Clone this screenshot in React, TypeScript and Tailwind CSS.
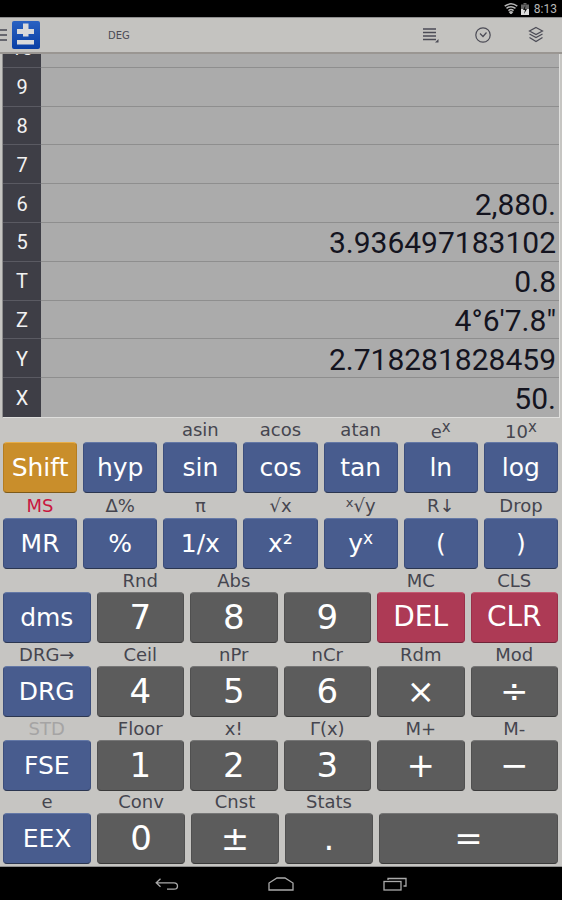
import type { ReactNode } from "react";

type KeyDef = { top?: ReactNode; topColor?: string; label: ReactNode; kind?: "blue" | "gray" | "red" | "gold"; size?: string };

const kindClass = {
  blue: "bg-[#485c8e] border-t-[#6478a6] border-x-[#3c4e7c] border-b-[#2b3650]",
  gray: "bg-[#5c5c5c] border-t-[#767676] border-x-[#505050] border-b-[#3a3a3a]",
  red: "bg-[#ad3a55] border-t-[#c45a72] border-x-[#9a3049] border-b-[#6e2438]",
  gold: "bg-[#c98e2b] border-t-[#e8ae48] border-x-[#b57d20] border-b-[#7d5a1a]",
};

const supX = <span className="text-[15px] align-[6px]">x</span>;

const topRows: KeyDef[][] = [
  [
    { label: "Shift", kind: "gold" },
    { label: "hyp" },
    { top: "asin", label: "sin" },
    { top: "acos", label: "cos" },
    { top: "atan", label: "tan" },
    { top: <span>e{supX}</span>, label: "ln" },
    { top: <span>10{supX}</span>, label: "log" },
  ],
  [
    { top: "MS", topColor: "text-[#c9163f]", label: "MR" },
    { top: "Δ%", label: "%" },
    { top: "π", label: "1/x" },
    { top: "√x", label: "x²" },
    { top: <span><span className="text-[13px] align-[5px]">x</span>√y</span>, label: <span>y<span className="text-[17px] align-[8px]">x</span></span> },
    { top: "R↓", label: "(" },
    { top: "Drop", label: ")" },
  ],
];

const bottomRows: KeyDef[][] = [
  [
    { label: "dms" },
    { top: "Rnd", label: "7", kind: "gray", size: "text-[34px]" },
    { top: "Abs", label: "8", kind: "gray", size: "text-[34px]" },
    { label: "9", kind: "gray", size: "text-[34px]" },
    { top: "MC", label: "DEL", kind: "red", size: "text-[28px]" },
    { top: "CLS", label: "CLR", kind: "red", size: "text-[28px]" },
  ],
  [
    { top: "DRG→", label: "DRG" },
    { top: "Ceil", label: "4", kind: "gray", size: "text-[34px]" },
    { top: "nPr", label: "5", kind: "gray", size: "text-[34px]" },
    { top: "nCr", label: "6", kind: "gray", size: "text-[34px]" },
    { top: "Rdm", label: "×", kind: "gray", size: "text-[34px]" },
    { top: "Mod", label: "÷", kind: "gray", size: "text-[34px]" },
  ],
  [
    { top: "STD", topColor: "text-[#a5a4a4]", label: "FSE" },
    { top: "Floor", label: "1", kind: "gray", size: "text-[34px]" },
    { top: "x!", label: "2", kind: "gray", size: "text-[34px]" },
    { top: "Γ(x)", label: "3", kind: "gray", size: "text-[34px]" },
    { top: "M+", label: "+", kind: "gray", size: "text-[34px]" },
    { top: "M-", label: "−", kind: "gray", size: "text-[34px]" },
  ],
];

const lastRow: KeyDef[] = [
  { top: "e", label: "EEX" },
  { top: "Conv", label: "0", kind: "gray", size: "text-[34px]" },
  { top: "Cnst", label: "±", kind: "gray", size: "text-[34px]" },
  { top: "Stats", label: ".", kind: "gray", size: "text-[34px]" },
  { label: "=", kind: "gray", size: "text-[34px]" },
];

const stack: [string, string][] = [
  ["10", ""],
  ["9", ""],
  ["8", ""],
  ["7", ""],
  ["6", "2,880."],
  ["5", "3.936497183102"],
  ["T", "0.8"],
  ["Z", "4°6'7.8\""],
  ["Y", "2.718281828459"],
  ["X", "50."],
];

function Key({ def }: { def: KeyDef }) {
  return (
    <div className="flex flex-col min-w-0">
      <div className={`flex-1 flex items-center justify-center text-[18px] leading-none whitespace-nowrap ${def.topColor ?? "text-[#45454f]"}`}>
        {def.top}
      </div>
      <div
        className={`h-[51px] shrink-0 flex items-center justify-center rounded-[4px] border text-white leading-none pb-px ${def.size ?? "text-[25px]"} ${kindClass[def.kind ?? "blue"]}`}
      >
        {def.label}
      </div>
    </div>
  );
}

export default function App() {
  return (
    <div className="w-[562px] h-[900px] flex flex-col overflow-hidden bg-[#c6c5c2] font-['DejaVu_Sans',sans-serif]">
      {/* status bar */}
      <div className="h-[17px] bg-black flex items-center justify-end gap-[3px] pr-[5px] shrink-0 text-[#b8b8b8]">
        <svg width="14" height="11" viewBox="0 0 14 11" fill="none" stroke="#b8b8b8" strokeWidth="1.500">
          <path d="M.7 3.200Q7-1.500 13.300 3.200" />
          <path d="M2.500 5.400Q7 2 11.500 5.400" />
          <path d="M4.400 7.600Q7 5.600 9.600 7.600" />
          <path d="M7 10.500 5.800 9.200Q7 8.400 8.200 9.200Z" fill="#b8b8b8" />
        </svg>
        <svg width="8" height="12" viewBox="0 0 8 12">
          <rect x="2.500" y="0" width="3" height="1.500" fill="#666" />
          <rect x="0" y="1.500" width="8" height="10.500" fill="#666" />
          <rect x="0" y="6" width="8" height="6" fill="#ddd" />
          <path d="M4.500 2 2 7h2L3 11l3-5H4z" fill="#111" />
        </svg>
        <span className="text-[12px] leading-none ml-[2px] font-['Roboto',sans-serif]">8:13</span>
      </div>

      {/* toolbar */}
      <div className="h-[37px] shrink-0 flex items-center bg-[#c4c3c0] border-t border-[#8f8f8f] border-b-2 border-b-[#9a9692]">
        <div className="w-[7px] flex flex-col gap-[3px] shrink-0">
          <span className="h-[2px] bg-[#66666e]" />
          <span className="h-[2px] bg-[#66666e]" />
          <span className="h-[2px] bg-[#66666e]" />
        </div>
        <svg width="28" height="28" viewBox="0 0 28 28" className="ml-[5px] shrink-0">
          <defs>
            <linearGradient id="logo" x1="0" y1="0" x2="0" y2="1">
              <stop offset="0" stopColor="#2a62c2" />
              <stop offset="1" stopColor="#0a3fa5" />
            </linearGradient>
          </defs>
          <rect width="28" height="28" rx="2" fill="url(#logo)" />
          <rect x="5" y="8" width="17" height="5" fill="#dadada" />
          <rect x="11" y="2.500" width="5.500" height="13" fill="#dadada" />
          <rect x="5" y="19" width="17" height="4.500" fill="#dadada" />
        </svg>
        <span className="ml-[68px] text-[10px] text-[#4b4b55]">DEG</span>
        <div className="ml-auto flex items-center">
          <svg width="16" height="16" viewBox="0 0 16 16" className="mr-[35px]">
            <path d="M0 2h13M0 5.500h13M0 9h13M0 12.500h13" stroke="#4b4b55" strokeWidth="1.600" />
            <path d="M15.500 12v3.500H12z" fill="#4b4b55" />
          </svg>
          <svg width="18" height="18" viewBox="0 0 18 18" className="mr-[35px]" fill="none" stroke="#4b4b55">
            <circle cx="9" cy="9" r="7.200" strokeWidth="1.200" />
            <path d="M6 7.500 9 10.500 12.500 6.500" strokeWidth="1.200" />
          </svg>
          <svg width="18" height="18" viewBox="0 0 18 18" className="mr-[17px]" fill="none" stroke="#4b4b55" strokeWidth="1.200">
            <path d="M9 1.500 15.500 5 9 8.500 2.500 5Z" />
            <path d="M2.500 8 9 11.500 15.500 8" />
            <path d="M2.500 11.500 9 15.500 15.500 11.500" />
          </svg>
        </div>
      </div>

      {/* stack display */}
      <div className="h-[364px] shrink-0 pl-[2px] pr-[2px]">
        <div className="h-full flex flex-col justify-end overflow-hidden bg-[#ababab] border-l border-l-[#8f8f8f] border-r border-r-[#dededc] border-b border-b-[#dededc]">
          {stack.map(([name, value], i) => {
            const last = i === stack.length - 1;
            return (
              <div key={name} className="flex h-[38.800px] shrink-0">
                <div className={`w-[38px] shrink-0 flex items-center justify-center pt-px bg-[#3e3e46] text-[#f2f2f2] text-[20px] font-['Roboto',sans-serif] ${last ? "" : "border-b border-[#5a5a62]"}`}>
                  {name}
                </div>
                <div className={`flex-1 flex items-center justify-end pr-[3px] pt-[3px] text-[#14141f] text-[30px] leading-none whitespace-nowrap font-['Roboto',sans-serif] ${last ? "" : "border-b border-[#8e8e8e]"}`}>
                  {value}
                </div>
              </div>
            );
          })}
        </div>
      </div>

      {/* keys */}
      <div className="flex-1 pl-[3px] pr-[4px] flex flex-col">
        {topRows.map((row, i) => (
          <div key={i} className={`grid grid-cols-7 gap-x-[6px] ${i === 0 ? "h-[75px]" : "h-[76px]"}`}>
            {row.map((k, j) => (
              <Key key={j} def={k} />
            ))}
          </div>
        ))}
        {bottomRows.map((row, i) => (
          <div key={i} className="grid grid-cols-6 gap-x-[6px] h-[74px]">
            {row.map((k, j) => (
              <Key key={j} def={k} />
            ))}
          </div>
        ))}
        <div className="grid grid-cols-[88px_88px_88px_88px_1fr] gap-x-[6px] h-[73px]">
          {lastRow.map((k, j) => (
            <Key key={j} def={k} />
          ))}
        </div>
      </div>

      {/* nav bar */}
      <div className="h-[34px] shrink-0 bg-black flex items-center justify-center gap-[89px] border-t border-[#8f8f8f]">
        <svg width="24" height="14" viewBox="0 0 24 14" fill="none" stroke="#aaa" strokeWidth="1.300">
          <path d="M5.500 1.800 1.200 5.800 5.500 9.800M1.200 5.800H19q3.500 0 3.500 3.200T19 12.200H12" />
        </svg>
        <svg width="26" height="14" viewBox="0 0 26 14" fill="none" stroke="#aaa" strokeWidth="1.300">
          <path d="M1 13V6L9 1H17L25 6V13Z" />
        </svg>
        <svg width="24" height="14" viewBox="0 0 24 14" fill="none" stroke="#aaa" strokeWidth="1.300">
          <rect x="1" y="4.500" width="17" height="8.500" />
          <path d="M5 3V1.500h18V9h-2.500" />
        </svg>
      </div>
    </div>
  );
}
